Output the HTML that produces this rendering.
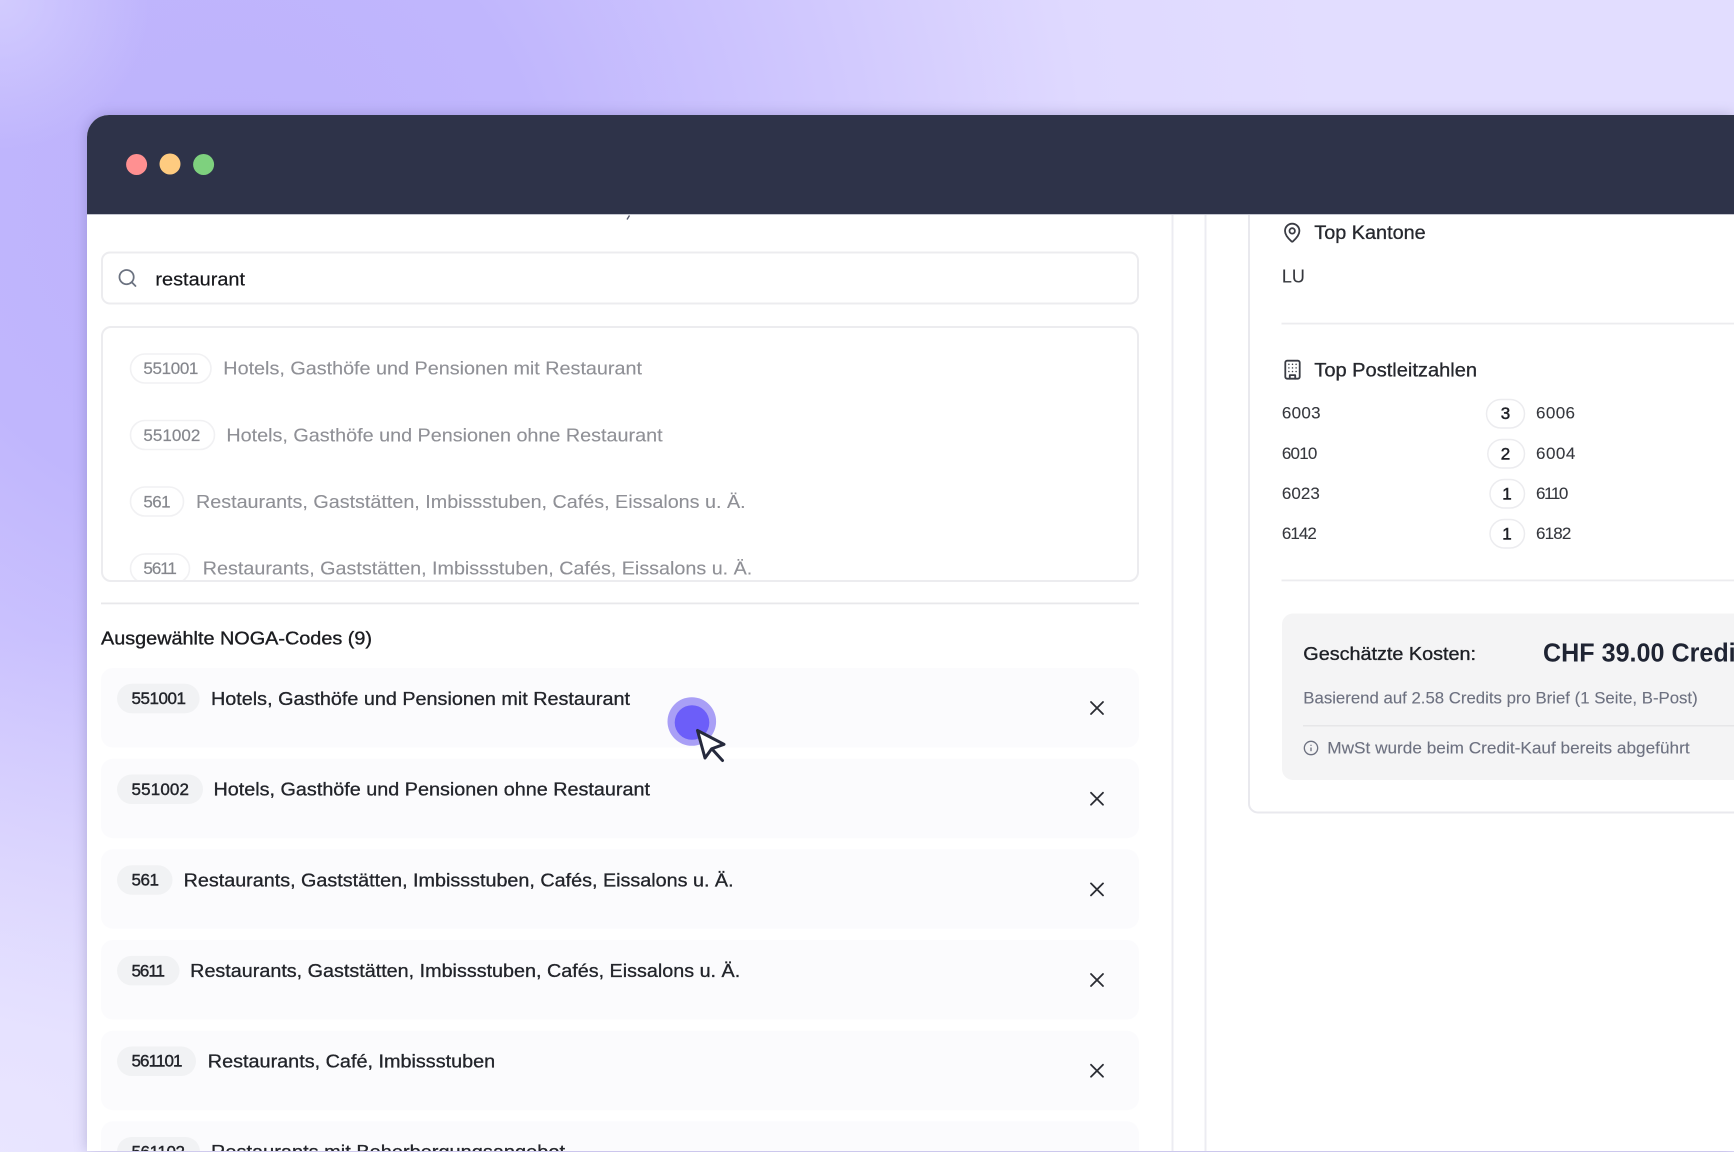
<!DOCTYPE html>
<html lang="de"><head><meta charset="utf-8"><title>NOGA-Codes</title>
<style>
html,body{margin:0;padding:0;width:1734px;height:1152px;overflow:hidden;background:#e2ddff}
#bg{position:absolute;left:0;top:0;width:1734px;height:1152px;background:radial-gradient(circle 150px at 0 0,rgba(222,218,255,.6),rgba(222,218,255,0) 100%),radial-gradient(circle 520px at 0 1152px,rgba(240,238,255,.55),rgba(240,238,255,0) 100%),radial-gradient(circle 1100px at 230px 200px,#bdb2fc 0,#c0b6fd 28%,#d2cafe 58%,#dfd9ff 78%,#e2ddff 100%)}
svg{position:absolute;left:0;top:0}
text{font-family:"Liberation Sans",sans-serif;white-space:pre}
.t{filter:blur(.35px)}
</style></head><body><div id="bg"></div>
<svg width="1734" height="1152" viewBox="0 0 1734 1152" xmlns="http://www.w3.org/2000/svg">
<defs>
<filter id="sh" x="-5%" y="-5%" width="110%" height="110%"><feGaussianBlur stdDeviation="7"/></filter>
<clipPath id="listclip"><rect x="102" y="327" width="1036" height="254" rx="9"/></clipPath>
<clipPath id="winclip"><rect x="87" y="214" width="1647" height="937"/></clipPath>
</defs>
<path d="M87 1151V137a22 22 0 0 1 22-22H1734V1151Z" fill="#4a4580" opacity=".3" filter="url(#sh)"/>
<path d="M87 1151V137a22 22 0 0 1 22-22H1734V1151Z" fill="#fff"/>
<path d="M87 214V137a22 22 0 0 1 22-22H1734V214Z" fill="#2e3349"/>
<rect x="87" y="214" width="1647" height="1" fill="#c3c5cf"/>
<circle cx="136.600" cy="164.500" r="10.500" fill="#ff9091"/>
<circle cx="170" cy="164" r="10.500" fill="#fecb80"/>
<circle cx="203.600" cy="164.500" r="10.500" fill="#7ed17e"/>
<path d="M629.500 215.500l-2.500 4" stroke="#555a6c" stroke-width="1.400" fill="none"/>

<rect x="1171.500" y="215" width="2" height="936" fill="#ececf2"/>
<rect x="1204.500" y="215" width="2" height="936" fill="#ececf2"/>
<path d="M1249 215V803a9 9 0 0 0 9 9.500H1734" fill="none" stroke="#e9e9ee" stroke-width="2"/>

<rect x="102" y="252.500" width="1036" height="51" rx="8" fill="#fff" stroke="#ececef" stroke-width="2"/>
<g transform="translate(116.800,267.300) scale(.89)" fill="none" stroke="#6b7280" stroke-width="2" stroke-linecap="round" stroke-linejoin="round"><circle cx="11" cy="11" r="8"/><path d="M21 21l-4.300-4.300"/></g>

<g clip-path="url(#listclip)">
<rect x="130.500" y="354" width="80.500" height="29" rx="14.500" fill="#fff" stroke="#f1f1f3" stroke-width="1.600"/>
<rect x="130.500" y="420.500" width="84" height="29" rx="14.500" fill="#fff" stroke="#f1f1f3" stroke-width="1.600"/>
<rect x="130.500" y="487" width="53" height="29" rx="14.500" fill="#fff" stroke="#f1f1f3" stroke-width="1.600"/>
<rect x="130.500" y="554" width="59" height="29" rx="14.500" fill="#fff" stroke="#f1f1f3" stroke-width="1.600"/>
<g class="t">
<g font-size="17" fill="#85878d" stroke="#85878d" stroke-width=".2">
<text x="143.400" y="374.200" textLength="55" lengthAdjust="spacing">551001</text>
<text x="143.400" y="441" textLength="57" lengthAdjust="spacing">551002</text>
<text x="143.400" y="507.700" textLength="27.200" lengthAdjust="spacing">561</text>
<text x="143.400" y="574" textLength="33.500" lengthAdjust="spacing">5611</text>
</g>
<g font-size="18.500" fill="#8f9096" stroke="#8f9096" stroke-width=".12">
<text x="223.300" y="374.500" textLength="418.700" lengthAdjust="spacingAndGlyphs">Hotels, Gasthöfe und Pensionen mit Restaurant</text>
<text x="226.400" y="441.300" textLength="436.200" lengthAdjust="spacingAndGlyphs">Hotels, Gasthöfe und Pensionen ohne Restaurant</text>
<text x="196" y="508" textLength="549.600" lengthAdjust="spacingAndGlyphs">Restaurants, Gaststätten, Imbissstuben, Cafés, Eissalons u. Ä.</text>
<text x="202.800" y="574.300" textLength="549.500" lengthAdjust="spacingAndGlyphs">Restaurants, Gaststätten, Imbissstuben, Cafés, Eissalons u. Ä.</text>
</g>
</g>
</g>
<rect x="102" y="327" width="1036" height="254" rx="9" fill="none" stroke="#ececef" stroke-width="2"/>
<rect x="101" y="602.500" width="1038" height="1.800" fill="#e8e8eb"/>

<text class="t" x="101" y="644.500" font-size="18.500" fill="#1b1c20" stroke="#1b1c20" stroke-width=".35" textLength="271" lengthAdjust="spacingAndGlyphs">Ausgewählte NOGA-Codes (9)</text>

<g clip-path="url(#winclip)">
<g fill="#fbfbfd">
<rect x="101" y="668" width="1038" height="79.500" rx="12"/>
<rect x="101" y="758.700" width="1038" height="79.500" rx="12"/>
<rect x="101" y="849.300" width="1038" height="79.500" rx="12"/>
<rect x="101" y="940" width="1038" height="79.500" rx="12"/>
<rect x="101" y="1030.700" width="1038" height="79.500" rx="12"/>
<rect x="101" y="1121.300" width="1038" height="79.500" rx="12"/>
</g>
<g fill="#f1f2f4">
<rect x="117" y="683.800" width="82.600" height="29.500" rx="14.700"/>
<rect x="117" y="774.500" width="86" height="29.500" rx="14.700"/>
<rect x="117" y="865.200" width="55.500" height="29.500" rx="14.700"/>
<rect x="117" y="955.900" width="62.500" height="29.500" rx="14.700"/>
<rect x="117" y="1046.500" width="79" height="29.500" rx="14.700"/>
<rect x="117" y="1137" width="83" height="29.500" rx="14.700"/>
</g>
<g class="t" font-size="17" fill="#22242a" stroke="#22242a" stroke-width=".4">
<text x="131.500" y="704.200" textLength="54.500" lengthAdjust="spacing">551001</text>
<text x="131.500" y="794.900" textLength="57.500" lengthAdjust="spacing">551002</text>
<text x="131.500" y="885.600" textLength="27.500" lengthAdjust="spacing">561</text>
<text x="131.500" y="976.300" textLength="33.500" lengthAdjust="spacing">5611</text>
<text x="131.500" y="1066.700" textLength="51" lengthAdjust="spacing">561101</text>
<text x="131.500" y="1157.500" textLength="53.500" lengthAdjust="spacing">561102</text>
</g>
<g class="t" font-size="18.500" fill="#22242a" stroke="#22242a" stroke-width=".3">
<text x="211" y="705" textLength="419" lengthAdjust="spacingAndGlyphs">Hotels, Gasthöfe und Pensionen mit Restaurant</text>
<text x="213.500" y="795.500" textLength="436.500" lengthAdjust="spacingAndGlyphs">Hotels, Gasthöfe und Pensionen ohne Restaurant</text>
<text x="183.600" y="886.300" textLength="550" lengthAdjust="spacingAndGlyphs">Restaurants, Gaststätten, Imbissstuben, Cafés, Eissalons u. Ä.</text>
<text x="190.200" y="977" textLength="550" lengthAdjust="spacingAndGlyphs">Restaurants, Gaststätten, Imbissstuben, Cafés, Eissalons u. Ä.</text>
<text x="207.800" y="1067.300" textLength="287.400" lengthAdjust="spacingAndGlyphs">Restaurants, Café, Imbissstuben</text>
<text x="211" y="1158" textLength="354" lengthAdjust="spacingAndGlyphs">Restaurants mit Beherbergungsangebot</text>
</g>
</g>

<g stroke="#2a2c33" stroke-width="1.800" stroke-linecap="round" fill="none">
<path d="M1091 702l12 12M1103 702l-12 12"/>
<path d="M1091 792.700l12 12M1103 792.700l-12 12"/>
<path d="M1091 883.400l12 12M1103 883.400l-12 12"/>
<path d="M1091 974l12 12M1103 974l-12 12"/>
<path d="M1091 1064.700l12 12M1103 1064.700l-12 12"/>
</g>

<circle cx="691.800" cy="721.500" r="24.300" fill="#a99ff6"/>
<circle cx="692" cy="722.500" r="17.300" fill="#6c5ef9"/>
<path d="M697.500 730.500L705 758L711.500 749L712.500 748.500L724 744.300Z" fill="#fff" stroke="#262a3d" stroke-width="3" stroke-linejoin="round" stroke-linecap="round"/>
<path d="M712 749L722.500 760.500" fill="none" stroke="#262a3d" stroke-width="3" stroke-linecap="round"/>

<g transform="translate(1281.400,221.900) scale(.9)" fill="none" stroke="#3a3c44" stroke-width="2" stroke-linecap="round" stroke-linejoin="round"><path d="M20 10c0 4.993-5.539 10.193-7.399 11.799a1 1 0 0 1-1.202 0C9.539 20.193 4 14.993 4 10a8 8 0 0 1 16 0"/><circle cx="12" cy="10" r="3"/></g>
<g transform="translate(1281.700,358.900) scale(.9)" fill="none" stroke="#3a3c44" stroke-width="2" stroke-linecap="round" stroke-linejoin="round"><rect x="4" y="2" width="16" height="20" rx="2"/><path d="M9 22v-4h6v4"/><path stroke-width="1.700" d="M8 6h.01M12 6h.01M16 6h.01M8 10h.01M12 10h.01M16 10h.01M8 14h.01M12 14h.01M16 14h.01"/></g>

<g class="t">
<text x="1314.300" y="239.200" font-size="19" fill="#26282e" stroke="#26282e" stroke-width=".3" textLength="111.400" lengthAdjust="spacingAndGlyphs">Top Kantone</text>
<text x="1281.900" y="282.500" font-size="18.500" fill="#36383e" stroke="#36383e" stroke-width=".1" textLength="23" lengthAdjust="spacingAndGlyphs">LU</text>
<text x="1314.300" y="376.500" font-size="19" fill="#26282e" stroke="#26282e" stroke-width=".3" textLength="162.700" lengthAdjust="spacingAndGlyphs">Top Postleitzahlen</text>
<g font-size="17" fill="#36383e" stroke="#36383e" stroke-width=".1">
<text x="1281.900" y="418.700" textLength="38.700" lengthAdjust="spacing">6003</text>
<text x="1281.900" y="459" textLength="35.400" lengthAdjust="spacing">6010</text>
<text x="1281.900" y="499" textLength="38" lengthAdjust="spacing">6023</text>
<text x="1281.900" y="539" textLength="35" lengthAdjust="spacing">6142</text>
<text x="1536" y="418.700" textLength="39" lengthAdjust="spacing">6006</text>
<text x="1536" y="459" textLength="39.300" lengthAdjust="spacing">6004</text>
<text x="1536" y="499" textLength="32.400" lengthAdjust="spacing">6110</text>
<text x="1536" y="539" textLength="35.400" lengthAdjust="spacing">6182</text>
</g>
</g>
<rect x="1281.500" y="322.700" width="452.500" height="1.800" fill="#ececef"/>
<rect x="1281.500" y="579.500" width="452.500" height="1.800" fill="#ececef"/>

<rect x="1486.500" y="399.500" width="38" height="28.500" rx="14.250" fill="#fff" stroke="#ececef" stroke-width="1.500"/>
<rect x="1487.800" y="439.500" width="36.700" height="28.500" rx="14.250" fill="#fff" stroke="#ececef" stroke-width="1.500"/>
<rect x="1490" y="479.500" width="34.500" height="28.500" rx="14.250" fill="#fff" stroke="#ececef" stroke-width="1.500"/>
<rect x="1490" y="519.500" width="34.500" height="28.500" rx="14.250" fill="#fff" stroke="#ececef" stroke-width="1.500"/>
<g class="t" font-size="17" fill="#1f2127" stroke="#1f2127" stroke-width=".5" text-anchor="middle">
<text x="1505.500" y="419">3</text>
<text x="1505.500" y="459.300">2</text>
<text x="1507" y="499.300">1</text>
<text x="1507" y="539.300">1</text>
</g>

<path d="M1734 613.500H1293a11 11 0 0 0-11 11V769a11 11 0 0 0 11 11H1734Z" fill="#f4f4f5"/>
<rect x="1303" y="725" width="431" height="1.500" fill="#e6e6e8"/>
<g class="t">
<text x="1303.300" y="660" font-size="18.500" fill="#1e2026" stroke="#1e2026" stroke-width=".35" textLength="172.700" lengthAdjust="spacingAndGlyphs">Geschätzte Kosten:</text>
<text x="1543" y="661.700" font-size="25.500" font-weight="700" fill="#1f2433" textLength="215" lengthAdjust="spacingAndGlyphs">CHF 39.00 Credits</text>
<text x="1303.300" y="703.700" font-size="16.800" fill="#6d7180" stroke="#6d7180" stroke-width=".12" textLength="394.400" lengthAdjust="spacingAndGlyphs">Basierend auf 2.58 Credits pro Brief (1 Seite, B-Post)</text>
<text x="1327.300" y="753.300" font-size="16.800" fill="#6d7180" stroke="#6d7180" stroke-width=".12" textLength="362.300" lengthAdjust="spacingAndGlyphs">MwSt wurde beim Credit-Kauf bereits abgeführt</text>
<text x="155.400" y="285.300" font-size="18.500" fill="#16171b" stroke="#16171b" stroke-width=".2" textLength="89.600" lengthAdjust="spacingAndGlyphs">restaurant</text>
</g>
<g transform="translate(1303,740) scale(.667)" fill="none" stroke="#6d7180" stroke-width="2" stroke-linecap="round" stroke-linejoin="round"><circle cx="12" cy="12" r="10"/><path d="M12 16v-4M12 8h.01"/></g>
</svg>
</body></html>
